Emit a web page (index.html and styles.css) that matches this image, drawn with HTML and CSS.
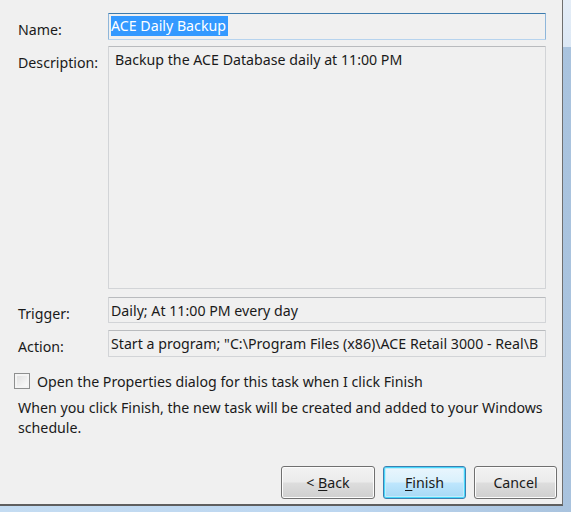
FILE: index.html
```html
<!DOCTYPE html>
<html>
<head>
<meta charset="utf-8">
<link rel="stylesheet" href="styles.css">
</head>
<body>
<div class="dialog">
  <div class="form">
    <div class="label row-name">Name:</div>
    <div class="field field-name row-name"><span class="sel">ACE Daily Backup</span></div>
    <div class="label row-desc">Description:</div>
    <div class="field field-desc row-desc">Backup the ACE Database daily at 11:00 PM</div>
    <div class="label row-trig">Trigger:</div>
    <div class="field field-trig row-trig">Daily; At 11:00 PM every day</div>
    <div class="label row-act">Action:</div>
    <div class="field field-act row-act">Start a program; "C:\Program Files (x86)\ACE Retail 3000 - Real\B</div>
  </div>
  <label class="check-row">
    <span class="checkbox"></span>
    <span class="check-text">Open the Properties dialog for this task when I click Finish</span>
  </label>
  <p class="info">When you click Finish, the new task will be created and added to your Windows<br>schedule.</p>
  <div class="spacer"></div>
  <div class="buttons">
    <button class="btn">&lt; <u>B</u>ack</button>
    <button class="btn btn-default"><u>F</u>inish</button>
    <button class="btn btn-cancel">Cancel</button>
  </div>
</div>
</body>
</html>
```
FILE: styles.css
```css
html, body {
  margin: 0;
  padding: 0;
}
body {
  width: 571px;
  height: 512px;
  overflow: hidden;
  background:
    linear-gradient(180deg, #e4edf7 0, #dce8f5 47px, transparent 47px),
    linear-gradient(90deg, #c4dcf2 0%, #bcd6f0 60%, #a9c3de 100%);
  font-family: "Noto Sans", "Open Sans", sans-serif;
  font-size: 14.2px;
  color: #1a1a1a;
}
.dialog {
  box-sizing: border-box;
  width: 563px;
  height: 506px;
  background: #f0f0f0;
  border-right: 1px solid #6f6f6f;
  border-bottom: 2px solid #5f5f5f;
  display: flex;
  flex-direction: column;
  padding: 13px 16px 0 0;
}
.form {
  display: grid;
  grid-template-columns: 108px 438px;
  grid-template-rows: 27px 6px 243px 8px 26px 7px 27px;
}
.row-name { grid-row: 1; }
.row-desc { grid-row: 3; }
.row-trig { grid-row: 5; }
.row-act { grid-row: 7; }
.label {
  grid-column: 1;
  padding-left: 18px;
  padding-top: 7px;
  line-height: 20px;
  white-space: nowrap;
}
.field {
  grid-column: 2;
  box-sizing: border-box;
  border: 1px solid #d2d4d7;
  border-top-color: #b9bbbe;
  border-radius: 1px;
  background: #f0f0f0;
  padding: 2px 2px 0 2px;
  line-height: 20px;
  white-space: nowrap;
  overflow: hidden;
}
.field-name {
  border-color: #b6d3ee;
  border-top-color: #3d7bad;
  border-left-color: #8eb6da;
  border-right-color: #8eb6da;
}
.sel {
  background: #3399ff;
  color: #fff;
  display: inline-block;
  padding-right: 2px;
}
.field-desc {
  padding: 3px 6px;
}
.field-trig, .field-act {
  padding-top: 3px;
}
.check-row {
  display: flex;
  align-items: center;
  margin-top: 14px;
  padding-left: 14px;
  height: 20px;
}
.checkbox {
  box-sizing: border-box;
  width: 16px;
  height: 16px;
  border: 1px solid #8e8f8f;
  background: linear-gradient(135deg, #dcdcdc 0%, #f4f4f4 70%, #ffffff 100%);
  box-shadow: inset 0 0 0 2px #f4f4f4;
  margin-right: 7px;
  flex: none;
}
.check-text {
  white-space: nowrap;
}
.info {
  margin: 7px 0 0 18px;
  line-height: 20px;
  white-space: nowrap;
}
.spacer { flex: 1; }
.buttons {
  display: flex;
  justify-content: flex-end;
  gap: 8px;
  margin-right: -11px;
  margin-bottom: 5px;
}
.btn {
  box-sizing: border-box;
  height: 33px;
  width: 94px;
  font: inherit;
  color: #1a1a1a;
  border: 1px solid #707070;
  border-radius: 3px;
  background: linear-gradient(180deg, #f2f2f2 0%, #ebebeb 48%, #dddddd 52%, #cfcfcf 100%);
  box-shadow: inset 0 0 0 1px #fcfcfc;
  padding: 0;
}
.btn-default, .btn-cancel { width: 83px; }
.btn-default {
  border-color: #3c7fb1;
  box-shadow: inset 0 0 0 1px #48d8fb, inset 0 0 0 2px #c2ecfb;
  background: linear-gradient(180deg, #eaf6fd 0%, #d9f0fc 48%, #bee6fd 52%, #a7d9f5 100%);
}
.btn u { text-decoration: underline; text-underline-offset: 2px; }
```
